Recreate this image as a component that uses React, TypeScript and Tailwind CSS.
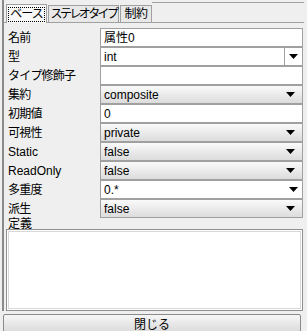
import { ReactNode } from "react";

const font = { fontFamily: '"Liberation Sans", "Noto Sans CJK JP", sans-serif' };

const Arrow = () => (
  <svg width="9" height="5" viewBox="0 0 9 5" className="shrink-0">
    <path d="M0 0h9L4.5 5z" fill="#000" />
  </svg>
);

const Row = ({ label, children }: { label: string; children: ReactNode }) => {
  // 英字ラベルは詰めない
  const latin = /^[A-Za-z]+$/.test(label);
  return (
    <div className="flex items-center h-[19px]">
      <span className={`w-[94px] pl-[2px] text-[12px] leading-none text-black ${latin ? "" : "tracking-[-0.8px]"}`}>
        {label}
      </span>
      <div className="flex-1 h-[19px]">{children}</div>
    </div>
  );
};

const TextField = ({ value }: { value: string }) => (
  <div className="h-full border border-[#a0a0a0] bg-white px-[3px] flex items-center text-[12px] text-black">
    {value}
  </div>
);

const Combo = ({ value }: { value: string }) => (
  <div className="h-full border border-[#a0a0a0] bg-gradient-to-b from-[#fafafa] to-[#dcdcdc] pl-[3px] pr-[7px] flex items-center justify-between text-[12px] text-black">
    <span>{value}</span>
    <Arrow />
  </div>
);

const EditCombo = ({ value, button = false }: { value: string; button?: boolean }) => (
  <div className="h-full border border-[#a0a0a0] bg-white flex items-center text-[12px] text-black">
    <span className="flex-1 pl-[3px]">{value}</span>
    {button ? (
      <div className="w-[18px] h-full border-l border-[#a0a0a0] flex items-center justify-center">
        <Arrow />
      </div>
    ) : (
      <div className="w-[18px] flex items-center justify-center">
        <Arrow />
      </div>
    )}
  </div>
);

export default function App() {
  return (
    <div className="w-[307px] h-[331px] bg-[#efefef] flex flex-col overflow-hidden" style={font}>
      <div className="flex-1 flex flex-col border-l-[2px] border-[#8a8a8a] ml-[2px] mr-[3px] pt-[3px]">
        <div className="flex items-end gap-[1px] pl-[2px] border-b border-[#a0a0a0] h-[20px] relative">
          <div className="absolute left-[148px] right-0 top-[-1px] border-t border-[#a0a0a0]" />
          <div className="w-[41px] h-[19px] border border-b-0 border-[#a0a0a0] bg-[#f8f8f8] flex items-center justify-center -mb-px">
            <span className="outline-1 outline-dotted outline-black px-[1px] text-[12px] tracking-[-1px] leading-[13px]">ベース</span>
          </div>
          <div className="w-[71px] h-[17px] border border-b-0 border-[#a0a0a0] bg-[#e8e8e8] flex items-center justify-center text-[12px] tracking-[-2.6px] whitespace-nowrap">
            ステレオタイプ
          </div>
          <div className="w-[32px] h-[17px] border border-b-0 border-[#a0a0a0] bg-[#e8e8e8] flex items-center justify-center text-[12px] tracking-[-0.5px]">
            制約
          </div>
        </div>
        <div className="flex flex-col pt-[5px] pl-[2px] pr-[1px] flex-1">
          <Row label="名前"><TextField value="属性0" /></Row>
          <Row label="型"><EditCombo value="int" button /></Row>
          <Row label="タイプ修飾子"><TextField value="" /></Row>
          <Row label="集約"><Combo value="composite" /></Row>
          <Row label="初期値"><TextField value="0" /></Row>
          <Row label="可視性"><Combo value="private" /></Row>
          <Row label="Static"><Combo value="false" /></Row>
          <Row label="ReadOnly"><Combo value="false" /></Row>
          <Row label="多重度"><EditCombo value="0.*" /></Row>
          <Row label="派生"><Combo value="false" /></Row>
          <div className="h-[11px] pl-[2px] text-[12px] leading-[12px]">定義</div>
          <div className="h-[82px] border border-[#909090] bg-white p-px">
            <div className="h-full border border-[#d8d8d8]" />
          </div>
        </div>
      </div>
      <div className="h-[22px] px-[3px] pt-[3px]">
        <div className="h-[21px] mr-[3px] border border-[#8a8a8a] rounded-[2px] bg-gradient-to-b from-[#f6f6f6] to-[#d8d8d8] flex items-center justify-center text-[12px]">
          閉じる
        </div>
      </div>
    </div>
  );
}
